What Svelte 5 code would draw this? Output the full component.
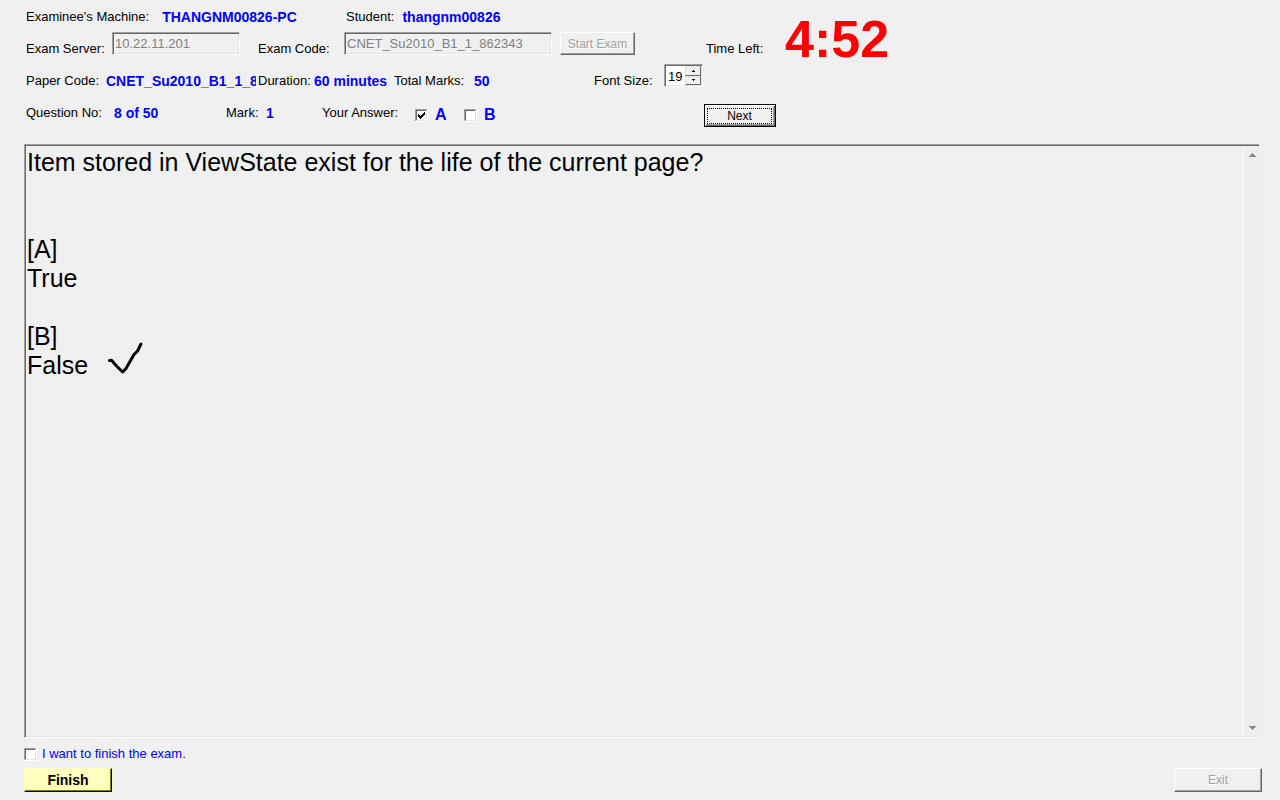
<script>
  let server = $state('10.22.11.201');
  let examCode = $state('CNET_Su2010_B1_1_862343');
  let fontSize = $state(19);
  let answerA = $state(true);
  let answerB = $state(false);
  let wantFinish = $state(false);
</script>

{#snippet box(checked)}
  <svg class="box" viewBox="0 0 13 13" aria-hidden="true" shape-rendering="crispEdges">
    <rect width="13" height="13" fill="#fff" />
    <path d="M0 0H12V1H1V12H0Z" fill="#a0a0a0" />
    <path d="M1 1H11V2H2V11H1Z" fill="#696969" />
    <path d="M11 1H12V12H1V11H11Z" fill="#e3e3e3" />
    {#if checked}
      <path d="M3 5h1v1h1v1h1v-1h1v-1h1v-1h1v-1h1v3h-1v1h-1v1h-1v1h-1v1h-1v-1h-1v-1h-1z" fill="#000" />
    {/if}
  </svg>
{/snippet}

<main>
  <header>
    <div class="details">
      <div class="row">
        <span class="item machine">Examinee's Machine: <b>THANGNM00826-PC</b></span>
        <span class="item">Student: <b>thangnm00826</b></span>
      </div>
      <div class="row">
        <label class="w-server" for="server">Exam Server:</label>
        <input id="server" class="field server" type="text" disabled bind:value={server} />
        <label class="w-code" for="code">Exam Code:</label>
        <input id="code" class="field code" type="text" disabled bind:value={examCode} />
        <button class="btn start" disabled>Start Exam</button>
      </div>
      <div class="row">
        <span class="w-paper">Paper Code:</span>
        <b class="paper">CNET_Su2010_B1_1_862343</b>
        <span class="w-duration">Duration:</span>
        <b class="w-minutes">60 minutes</b>
        <span class="w-total">Total Marks:</span>
        <b class="w-marks">50</b>
        <label class="w-size" for="size">Font Size:</label>
        <div class="spinner">
          <input id="size" type="text" bind:value={fontSize} />
          <div class="steps">
            <button aria-label="Increase" onclick={() => (fontSize = +fontSize + 1)}>
              <svg viewBox="0 0 3 2" shape-rendering="crispEdges"><path d="M1 0h1v1h1v1H0V1h1z" /></svg>
            </button>
            <button aria-label="Decrease" onclick={() => (fontSize = +fontSize - 1)}>
              <svg viewBox="0 0 3 2" shape-rendering="crispEdges"><path d="M0 0h3v1H2v1H1V1H0z" /></svg>
            </button>
          </div>
        </div>
      </div>
      <div class="row">
        <span class="w-question">Question No:</span>
        <b class="w-number">8 of 50</b>
        <span class="w-mark">Mark:</span>
        <b class="w-one">1</b>
        <span class="w-answer">Your Answer:</span>
        <label class="choice"><input type="checkbox" bind:checked={answerA} />{@render box(answerA)}<b>A</b></label>
        <label class="choice"><input type="checkbox" bind:checked={answerB} />{@render box(answerB)}<b>B</b></label>
      </div>
    </div>
    <div class="side">
      <div class="timer"><span>Time Left:</span><strong>4:52</strong></div>
      <button class="btn next"><span>Next</span></button>
    </div>
  </header>

  <section class="paper-view">
    <div class="question">
      <p>Item stored in ViewState exist for the life of the current page?</p>
      <p class="first">[A]</p>
      <p>True</p>
      <p class="second">[B]</p>
      <p class="marked">False
        <svg class="tick" viewBox="0 0 36 34" aria-hidden="true">
          <path d="M1.5 18.5L3.5 18.3L9 24.5L14.7 30L18 26.5L26 12.5L29.5 9L33 2" />
        </svg>
      </p>
    </div>
    <div class="scroll" aria-hidden="true">
      <svg viewBox="0 0 7 4" shape-rendering="crispEdges"><path d="M3 0h1v1h1v1h1v1h1v1H0V3h1V2h1V1h1z" /></svg>
      <svg viewBox="0 0 7 4" shape-rendering="crispEdges"><path d="M0 0h7v1H6v1H5v1H4v1H3V3H2V2H1V1H0z" /></svg>
    </div>
  </section>

  <footer>
    <label class="confirm"><input type="checkbox" bind:checked={wantFinish} />{@render box(wantFinish)}I want to finish the exam.</label>
    <div class="actions">
      <button class="btn finish">Finish</button>
      <button class="btn exit" disabled>Exit</button>
    </div>
  </footer>
</main>

<style>
  :global(body) { margin: 0; background: #f0f0f0; }
  main {
    box-sizing: border-box;
    min-height: 100vh;
    display: flex;
    flex-direction: column;
    padding: 0 18px 8px 24px;
    font: 13px/34px "Liberation Sans", Arial, sans-serif;
    color: #000;
    background: #f0f0f0;
  }
  header { display: flex; height: 144px; }
  .details { width: 680px; flex: none; }
  .row { display: flex; align-items: flex-start; height: 32px; padding-left: 2px; white-space: nowrap; }
  .row > * { flex: none; }
  b { color: #00f; font-size: 14px; }
  .item { display: flex; gap: 8px; }
  .item.machine { width: 320px; gap: 13px; }
  input, button { font: inherit; margin: 0; padding: 0; border-radius: 0; box-sizing: border-box; }
  .w-server { width: 86px; }
  .w-code { width: 86px; }
  .field {
    height: 23px;
    padding: 0 0 0 2px;
    line-height: 21px;
    font-size: 13px;
    color: #808080;
    background: #f0f0f0;
    border: 1px solid;
    border-color: #a0a0a0 #fff #fff #a0a0a0;
    box-shadow: inset 1px 1px #696969, inset -1px -1px #e3e3e3;
  }
  .field.server { width: 128px; margin-right: 18px; }
  .field.code { width: 208px; margin-right: 8px; }
  .btn {
    border: 1px solid;
    border-color: #fff #696969 #696969 #fff;
    box-shadow: inset -1px -1px #a0a0a0;
    background: #f0f0f0;
    line-height: 20px;
    font-size: 12px;
    color: #000;
  }
  .btn:disabled { color: #a0a0a0; text-shadow: 1px 1px #fff; }
  .start { width: 75px; height: 23px; }
  .w-paper { width: 80px; }
  .paper { width: 150px; margin-right: 2px; overflow: hidden; }
  .w-duration { width: 56px; }
  .w-minutes { width: 80px; }
  .w-total { width: 80px; }
  .w-marks { width: 120px; }
  .w-size { width: 70px; }
  .spinner {
    display: flex;
    box-sizing: border-box;
    width: 39px;
    height: 23px;
    padding: 1px;
    border: 1px solid;
    border-color: #a0a0a0 #fff #fff #a0a0a0;
    box-shadow: inset 1px 1px #696969, inset -1px -1px #e3e3e3;
    background: #fff;
  }
  .spinner input { width: 19px; border: 0; padding: 2px 0 0 2px; font-size: 13px; line-height: 17px; background: transparent; }
  .steps { width: 16px; display: flex; flex-direction: column; }
  .steps button {
    flex: 1;
    min-height: 0;
    display: flex;
    align-items: center;
    justify-content: center;
    background: #f0f0f0;
    border: 1px solid;
    border-color: #e3e3e3 #696969 #696969 #e3e3e3;
  }
  .steps svg { width: 3px; height: 2px; }
  .w-question { width: 88px; }
  .w-number { width: 112px; }
  .w-mark { width: 40px; }
  .w-one { width: 56px; }
  .w-answer { width: 93px; }
  .choice { display: flex; align-items: center; width: 49px; height: 38px; line-height: 38px; }
  .choice b { font-size: 16px; line-height: 42px; margin-left: 7px; }
  .choice input, .confirm input { appearance: none; width: 0; height: 0; }
  .box { width: 13px; height: 13px; flex: none; }
  .side { padding-top: 12px; }
  .timer { display: flex; align-items: center; height: 54px; padding-left: 2px; margin-bottom: 38px; }
  .timer span { width: 79px; padding-top: 20px; }
  .timer strong { font-size: 52px; line-height: 52px; color: #f00; }
  .next { display: block; width: 72px; height: 23px; padding: 2px; border-color: #000; box-shadow: inset 1px 1px #fff, inset -1px -1px #696969, inset -2px -2px #a0a0a0; }
  .next span { display: block; width: 65px; height: 16px; line-height: 15px; box-sizing: border-box; border: 1px dotted #000; }
  .paper-view {
    flex: 1;
    display: flex;
    margin-right: 3px;
    padding: 1px 0 1px 1px;
    border-style: solid;
    border-width: 1px 0 1px 1px;
    border-color: #a0a0a0 #fff #fff #a0a0a0;
    box-shadow: inset 1px 1px #696969, inset 0 -1px #e3e3e3;
  }
  .question { flex: 1; padding: 2px 1px; font-size: 25px; line-height: 29px; }
  p { margin: 0; }
  .first { margin-top: 58px; }
  .second { margin-top: 29px; }
  .marked { display: flex; gap: 20px; height: 29px; }
  .tick { width: 36px; height: 34px; margin-top: -9px; overflow: visible; }
  .tick path { fill: none; stroke: #000; stroke-width: 3; stroke-linecap: round; stroke-linejoin: round; }
  .scroll {
    box-sizing: border-box;
    width: 16px;
    padding: 7px 0 6px 2px;
    display: flex;
    flex-direction: column;
    align-items: center;
    justify-content: space-between;
    border-left: 1px solid #fff;
    background: #eee;
  }
  .scroll svg { width: 7px; height: 4px; fill: #888; }
  footer { height: 54px; }
  .confirm { display: flex; align-items: center; width: max-content; height: 30px; line-height: 30px; padding-top: 2px; box-sizing: border-box; color: #00f; }
  .confirm .box { margin-right: 5px; }
  .actions { display: flex; justify-content: space-between; }
  .finish { width: 88px; height: 24px; font-size: 14px; font-weight: bold; background: #ffffc0; border-color: #ffffc0 #000 #000 #ffffc0; box-shadow: inset -1px -1px #808000; }
  .exit { width: 88px; height: 24px; }
</style>
